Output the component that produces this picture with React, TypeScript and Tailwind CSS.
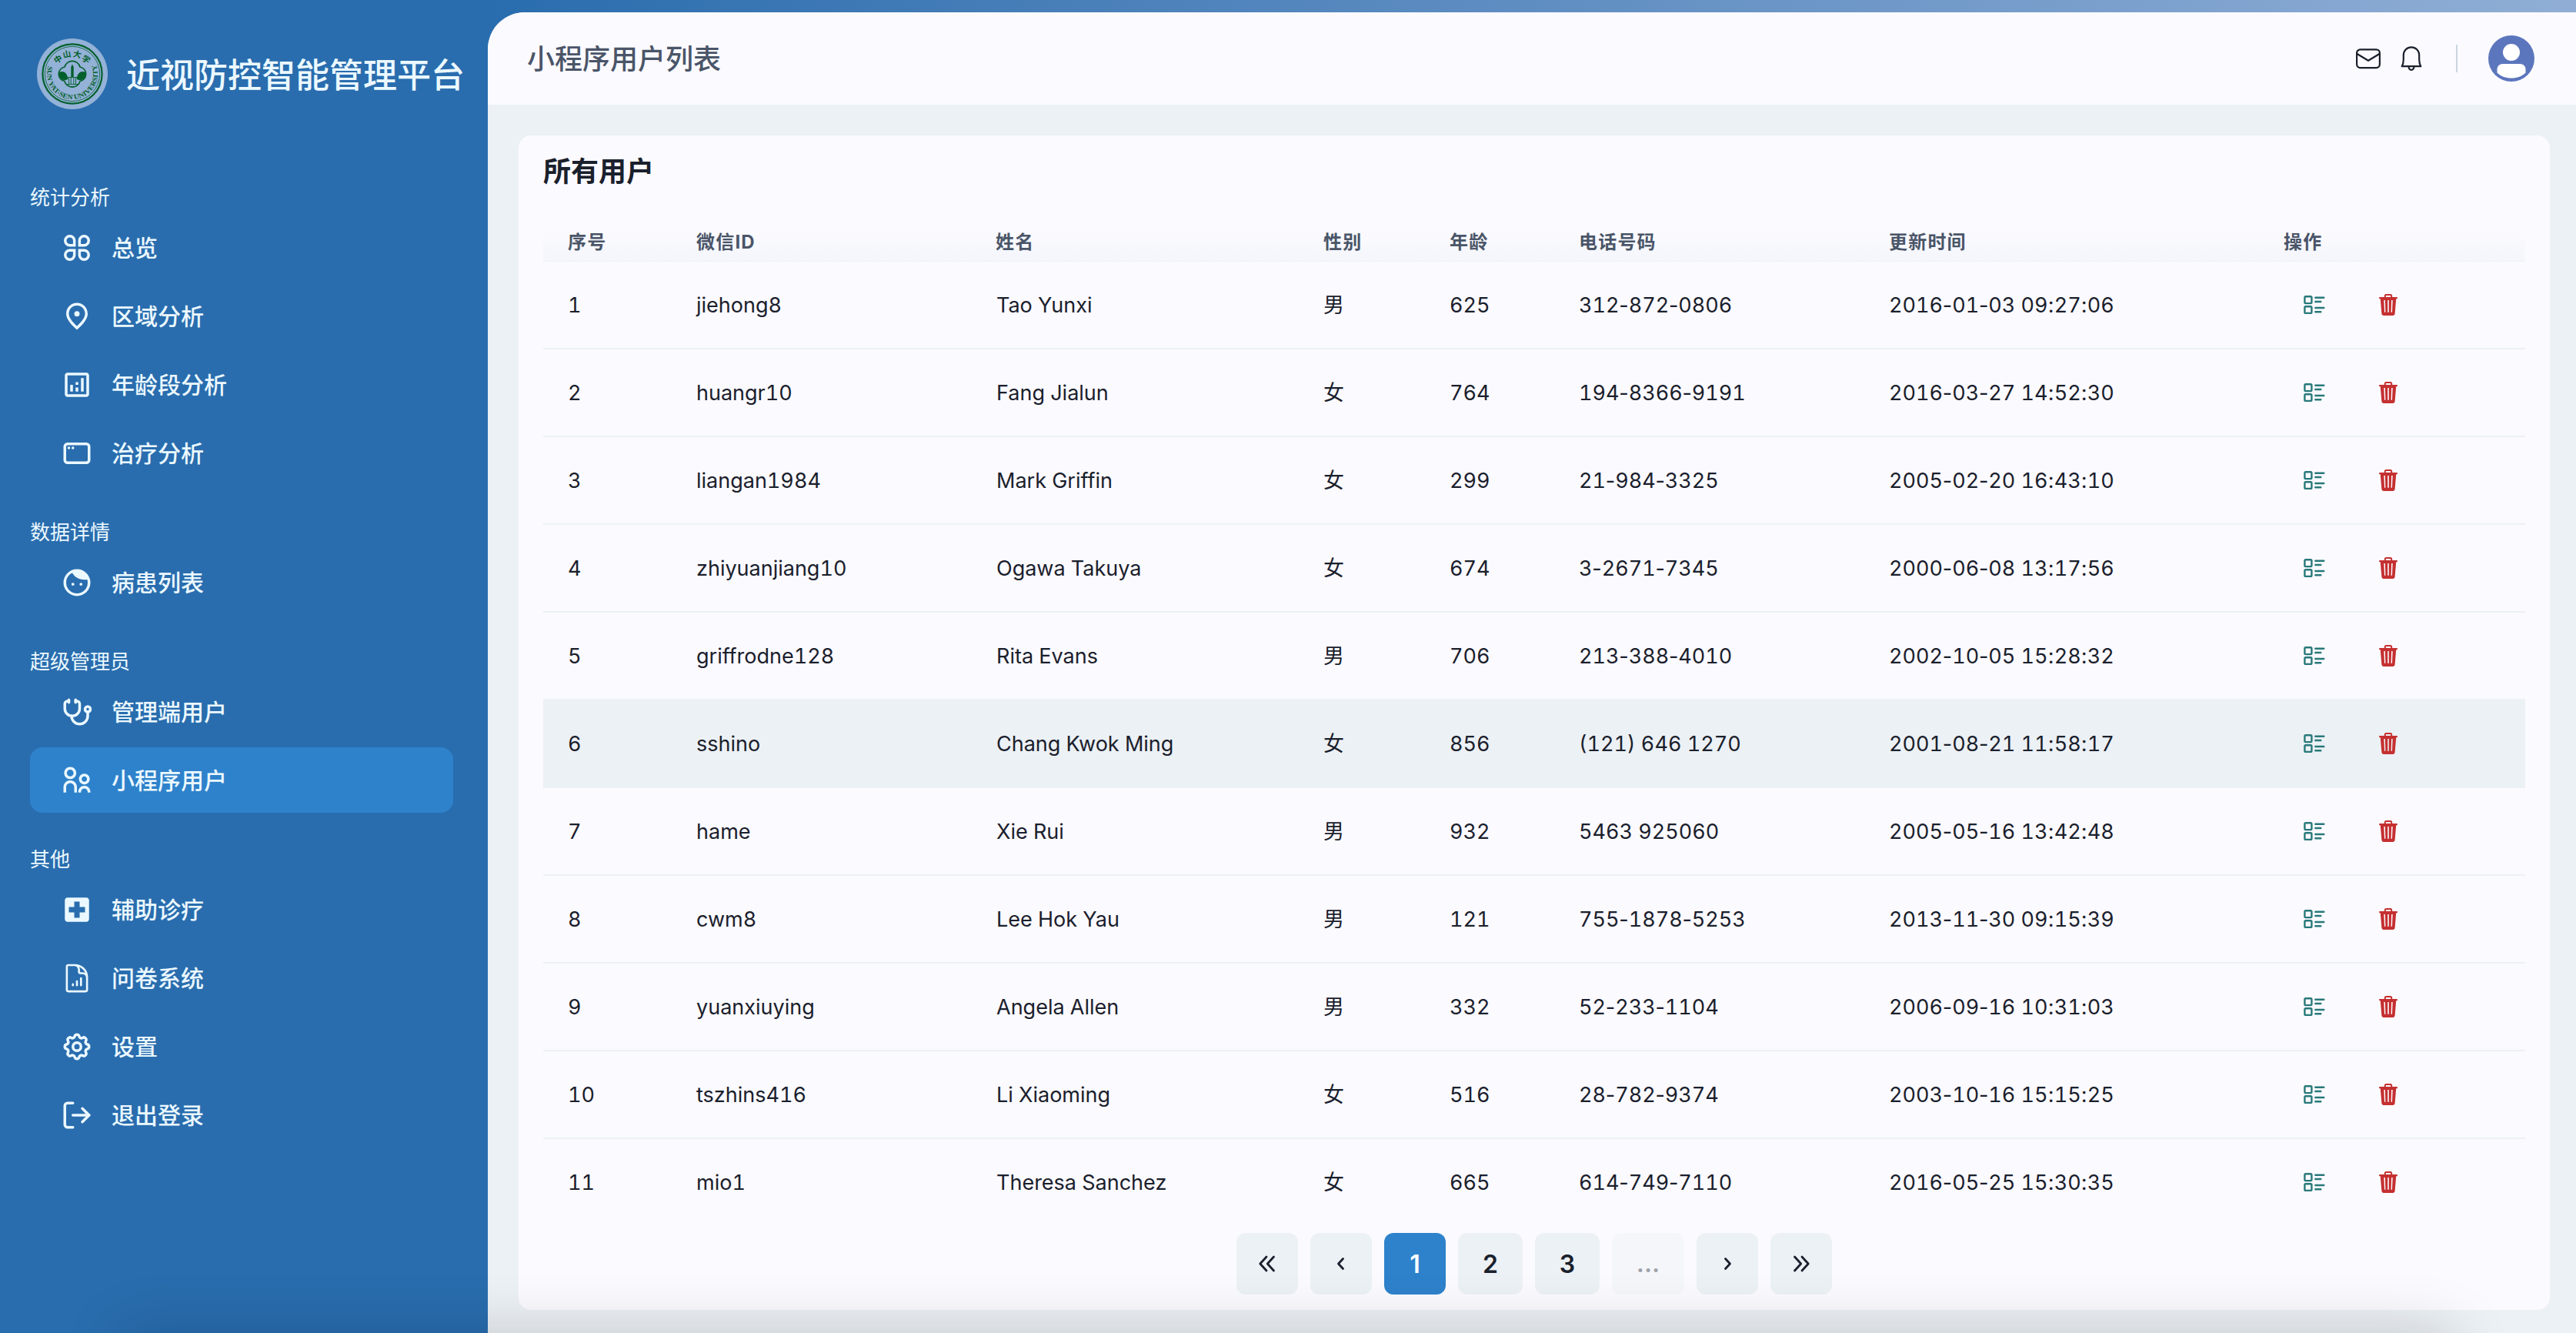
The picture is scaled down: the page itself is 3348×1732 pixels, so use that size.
import type { ReactNode } from "react";
import { RiParentLine } from "react-icons/ri";
import { TbSettings, TbStethoscope } from "react-icons/tb";
import { LogOut } from "lucide-react";

const ICON = "size-[42px]";

function StrokeIcon({ width = 2, children }: { width?: number; children: ReactNode }) {
  return (
    <svg viewBox="0 0 24 24" className={ICON} fill="none" stroke="currentColor" strokeWidth={width} strokeLinecap="round" strokeLinejoin="round">
      {children}
    </svg>
  );
}

function FillIcon({ children }: { children: ReactNode }) {
  return (
    <svg viewBox="0 0 24 24" className={ICON} fill="currentColor">
      {children}
    </svg>
  );
}

const icons = {
  overview: (
    <StrokeIcon>
      <path strokeLinejoin="miter" d="M10.1 10.1V6.7A3.4 3.4 0 1 0 6.7 10.1ZM13.9 10.1V6.7A3.4 3.4 0 1 1 17.3 10.1ZM10.1 13.9V17.3A3.4 3.4 0 1 1 6.7 13.9ZM13.9 13.9V17.3A3.4 3.4 0 1 0 17.3 13.9Z" />
    </StrokeIcon>
  ),
  region: (
    <FillIcon>
      <path fillRule="evenodd" d="M12 2c4.2 0 8 3.22 8 8.2 0 3.32-2.67 7.25-8 11.8-5.33-4.55-8-8.48-8-11.8C4 5.22 7.8 2 12 2zm6 8.2C18 6.57 15.35 4 12 4s-6 2.57-6 6.2c0 2.34 1.95 5.44 6 9.14 4.05-3.7 6-6.8 6-9.14z" />
      <circle cx="12" cy="10.2" r="2" />
    </FillIcon>
  ),
  age: (
    <FillIcon>
      <path d="M19 3H5c-1.1 0-2 .9-2 2v14c0 1.1.9 2 2 2h14c1.1 0 2-.9 2-2V5c0-1.1-.9-2-2-2zm0 16H5V5h14v14z" />
      <path d="M7 12h2v5H7zM15 7h2v10h-2zM11 14h2v3h-2zM11 10h2v2h-2z" />
    </FillIcon>
  ),
  treatment: (
    <StrokeIcon>
      <rect x="3" y="5" width="18" height="14" rx="2" />
      <path d="M6 8h.01M9 8h.01" />
    </StrokeIcon>
  ),
  patients: (
    <FillIcon>
      <circle cx="12" cy="12" r="9" fill="none" stroke="currentColor" strokeWidth="2" />
      <path d="M8.2 4.2C10 7.8 13.4 9.9 17.5 9.9c1.2 0 2.4-.1 3.6-.5A9.4 9.4 0 0 0 8.2 4.2z" />
      <circle cx="9" cy="13.2" r="1.1" />
      <circle cx="15" cy="13.2" r="1.1" />
    </FillIcon>
  ),
  admins: <TbStethoscope className={ICON} />,
  users: <RiParentLine className={ICON} />,
  hospital: (
    <FillIcon>
      <path fillRule="evenodd" d="M19 3H5c-1.1 0-2 .9-2 2v14c0 1.1.9 2 2 2h14c1.1 0 2-.9 2-2V5c0-1.1-.9-2-2-2zm-1 11h-4v4h-4v-4H6v-4h4V6h4v4h4v4z" />
    </FillIcon>
  ),
  survey: (
    <StrokeIcon width={1.5}>
      <path d="M19.5 14.25v-2.625a3.375 3.375 0 0 0-3.375-3.375h-1.5A1.125 1.125 0 0 1 13.5 7.125v-1.5a3.375 3.375 0 0 0-3.375-3.375H8.25M9 16.5v.75m3-3v3M15 12v5.25m-4.5-15H5.625c-.621 0-1.125.504-1.125 1.125v17.25c0 .621.504 1.125 1.125 1.125h12.75c.621 0 1.125-.504 1.125-1.125V11.25a9 9 0 0 0-9-9Z" />
    </StrokeIcon>
  ),
  settings: <TbSettings className={ICON} />,
  logout: <LogOut className={ICON} strokeWidth={2} />,
};

const sections: { title: string; items: { label: string; icon: keyof typeof icons; active?: boolean }[] }[] = [
  {
    title: "统计分析",
    items: [
      { label: "总览", icon: "overview" },
      { label: "区域分析", icon: "region" },
      { label: "年龄段分析", icon: "age" },
      { label: "治疗分析", icon: "treatment" },
    ],
  },
  { title: "数据详情", items: [{ label: "病患列表", icon: "patients" }] },
  {
    title: "超级管理员",
    items: [
      { label: "管理端用户", icon: "admins" },
      { label: "小程序用户", icon: "users", active: true },
    ],
  },
  {
    title: "其他",
    items: [
      { label: "辅助诊疗", icon: "hospital" },
      { label: "问卷系统", icon: "survey" },
      { label: "设置", icon: "settings" },
      { label: "退出登录", icon: "logout" },
    ],
  },
];

const headers = ["序号", "微信ID", "姓名", "性别", "年龄", "电话号码", "更新时间", "操作"];

const rows = [
  ["1", "jiehong8", "Tao Yunxi", "男", "625", "312-872-0806", "2016-01-03 09:27:06"],
  ["2", "huangr10", "Fang Jialun", "女", "764", "194-8366-9191", "2016-03-27 14:52:30"],
  ["3", "liangan1984", "Mark Griffin", "女", "299", "21-984-3325", "2005-02-20 16:43:10"],
  ["4", "zhiyuanjiang10", "Ogawa Takuya", "女", "674", "3-2671-7345", "2000-06-08 13:17:56"],
  ["5", "griffrodne128", "Rita Evans", "男", "706", "213-388-4010", "2002-10-05 15:28:32"],
  ["6", "sshino", "Chang Kwok Ming", "女", "856", "(121) 646 1270", "2001-08-21 11:58:17"],
  ["7", "hame", "Xie Rui", "男", "932", "5463 925060", "2005-05-16 13:42:48"],
  ["8", "cwm8", "Lee Hok Yau", "男", "121", "755-1878-5253", "2013-11-30 09:15:39"],
  ["9", "yuanxiuying", "Angela Allen", "男", "332", "52-233-1104", "2006-09-16 10:31:03"],
  ["10", "tszhins416", "Li Xiaoming", "女", "516", "28-782-9374", "2003-10-16 15:15:25"],
  ["11", "mio1", "Theresa Sanchez", "女", "665", "614-749-7110", "2016-05-25 15:30:35"],
];

const GRID = "grid grid-cols-[167px_389px_426px_164px_168px_403px_513px_346px]";

function Emblem() {
  return (
    <svg viewBox="0 0 92 92" className="size-[92px] shrink-0" fill="none" stroke="#03602c">
      <circle cx="46" cy="46" r="46" fill="#94b1d7" stroke="none" />
      <circle cx="46" cy="46" r="38.6" strokeWidth="2.2" />
      <circle cx="46" cy="46" r="35.6" strokeWidth="0.8" />
      <path id="emblem-arc" d="M14.6 35.8A33 33 0 1 0 77.4 35.8" stroke="none" />
      <g fill="#03602c" stroke="none" fontFamily="Liberation Serif, serif" fontWeight="700">
        <text fontSize="9">
          <textPath href="#emblem-arc" textLength="126" lengthAdjust="spacingAndGlyphs">SUN YAT-SEN UNIVERSITY</textPath>
        </text>
        <g fontFamily="Noto Sans CJK SC, sans-serif" fontSize="10.5" textAnchor="middle">
          <text transform="translate(27.5 27) rotate(-32)" y="3.8">中</text>
          <text transform="translate(38.8 20.5) rotate(-12)" y="3.8">山</text>
          <text transform="translate(52.5 20.5) rotate(12)" y="3.8">大</text>
          <text transform="translate(64 27) rotate(32)" y="3.8">学</text>
        </g>
      </g>
      <path strokeWidth="1.6" d="M36 37A10.200 9.500 0 0 1 56 37A10 9.500 0 0 1 56 55.500A10.200 9.500 0 0 1 36 55.500A10 9.500 0 0 1 36 37Z" />
      <path fill="#03602c" stroke="none" d="M29 44c5-2.500 10 0 11.500 8.500-3 2.500-7.500 2-9.500-.5s-3-5.500-2-8zM63 44c-5-2.500-10 0-11.500 8.500 3 2.500 7.500 2 9.500-.5s3-5.500 2-8zM44.300 37l1.700-3.500 1.700 3.500v13h-3.400z" />
      <path strokeWidth="0.9" d="M40 50.500h12M41.500 51v8M44.200 50v9M47.800 50v9M50.500 51v8M39 59.500h14M42 62.500h8" />
    </svg>
  );
}

function Sidebar() {
  return (
    <aside className="flex w-[634px] shrink-0 flex-col bg-[#296dae] text-[#ebf8ff]">
      <div className="flex h-[192px] items-center gap-6 pl-12 whitespace-nowrap">
        <Emblem />
        <h1 className="pt-1 text-[44px] leading-none font-medium">近视防控智能管理平台</h1>
      </div>
      <nav className="flex w-[589px] flex-col gap-[39px] pt-[43px] pl-[39px]">
        {sections.map((s) => (
          <section key={s.title} className="flex flex-col gap-1">
            <h2 className="flex h-10 items-center pt-[3px] text-[26px] leading-none font-normal">{s.title}</h2>
            {s.items.map((item) => (
              <a
                key={item.label}
                className={
                  item.active
                    ? "flex h-[85px] items-center gap-6 rounded-2xl bg-[#2e82cb] pl-10"
                    : "flex h-[85px] items-center gap-6 pl-10"
                }
              >
                {icons[item.icon]}
                <span className="text-[30px] leading-none font-medium">{item.label}</span>
              </a>
            ))}
          </section>
        ))}
      </nav>
    </aside>
  );
}

function Header() {
  return (
    <header className="flex h-[120px] items-center justify-between bg-[#fbfaff] pr-[54px] pl-[51px]">
      <h2 className="pt-0.5 text-[36px] leading-none font-medium text-[#4a5568]">小程序用户列表</h2>
      <div className="flex items-center">
        <svg viewBox="0 0 32 32" className="size-8" fill="none" stroke="#1a202c" strokeWidth="2.200">
          <rect x="1.100" y="4.300" width="29.800" height="23.800" rx="4.500" />
          <path d="M1.500 10L16 18.800L30.500 10" strokeLinejoin="round" />
        </svg>
        <svg viewBox="0 0 32 32" className="ml-6 size-8" fill="none" stroke="#1a202c" strokeWidth="2.200" strokeLinejoin="round">
          <path d="M3.700 26.200C5.300 23.500 5.800 20.500 5.800 17.500V11.500a10.200 10.200 0 0 1 20.400 0V17.500c0 3 .5 6 2.100 8.700Z" />
          <path d="M12.500 26.500c.2 2.600 1.600 4.300 3.500 4.300s3.300-1.700 3.500-4.300" />
        </svg>
        <div className="ml-[42px] h-9 w-0.5 bg-[#cbd5df]" />
        <svg viewBox="0 0 60 60" className="ml-10 size-[60px]">
          <circle cx="30" cy="30" r="30" fill="#5c76bd" />
          <circle cx="30" cy="22" r="11" fill="#fff" />
          <path fill="#fff" d="M19 37h22c4.500 0 7.500 3 7.500 7v4.500C44 53 37.500 55.500 30 55.500S16 53 11.500 48.500V44c0-4 3-7 7.500-7z" />
        </svg>
      </div>
    </header>
  );
}

function DetailIcon() {
  return (
    <svg viewBox="0 0 28 24" className="h-6 w-7" fill="none" stroke="#28797a" strokeWidth="2.400" strokeLinecap="round">
      <rect x="1.400" y="1.300" width="9" height="8.800" rx="1.300" />
      <rect x="1.400" y="14.200" width="9" height="8.800" rx="1.300" />
      <path d="M15.300 2.700H26.300M15.300 8H22.300M15.300 16H26.300M15.300 21.300H22.300" />
    </svg>
  );
}

function TrashIcon() {
  return (
    <svg viewBox="0 0 24 28" className="h-7 w-6" fill="#c53030">
      <path d="M7.800 4V2.500C7.800 1.600 8.400 1 9.300 1h5.400c.9 0 1.500.6 1.500 1.500V4" fill="none" stroke="#c53030" strokeWidth="2" />
      <rect x="0" y="4" width="24" height="2.200" rx="1" />
      <path fillRule="evenodd" d="M1.700 5.500H22.300L20.600 25.600c-.1 1.400-1.200 2.400-2.600 2.400H6c-1.400 0-2.500-1-2.600-2.400ZM6.300 8l.7 15.800h1.400L7.900 8ZM11.200 8v15.800h1.600V8ZM16.100 8l-.5 15.800h1.400L17.700 8Z" />
    </svg>
  );
}

function Chevrons({ kind }: { kind: "first" | "prev" | "next" | "last" }) {
  const paths = {
    first: "M19 11L10.800 20L19 29M28.500 11L20.300 20L28.500 29",
    prev: "M22.500 13.500L16.500 20L22.500 26.500",
    next: "M17.500 13.500L23.500 20L17.500 26.500",
    last: "M11.500 11L19.700 20L11.500 29M21 11L29.200 20L21 29",
  };
  return (
    <svg viewBox="0 0 40 40" className="size-10" fill="none" stroke="#1a202c" strokeWidth="2.800" strokeLinecap="round" strokeLinejoin="round">
      <path d={paths[kind]} />
    </svg>
  );
}

const PAGE = "flex h-20 items-center justify-center rounded-xl text-[32px] leading-none font-semibold";

function Pagination() {
  return (
    <div className="mt-2 flex justify-center gap-4 text-[#1a202c]">
      <button className={`${PAGE} w-20 bg-[#ecf1f5]`}><Chevrons kind="first" /></button>
      <button className={`${PAGE} w-20 bg-[#ecf1f5]`}><Chevrons kind="prev" /></button>
      <button className={`${PAGE} w-20 bg-[#2e82cb] pt-0.5 text-white`}>1</button>
      <button className={`${PAGE} w-[84px] bg-[#ecf1f5] pt-0.5`}>2</button>
      <button className={`${PAGE} w-[84px] bg-[#ecf1f5] pt-0.5`}>3</button>
      <button className={`${PAGE} w-[94px] bg-[#ecf1f5] opacity-40`}>...</button>
      <button className={`${PAGE} w-20 bg-[#ecf1f5]`}><Chevrons kind="next" /></button>
      <button className={`${PAGE} w-20 bg-[#ecf1f5]`}><Chevrons kind="last" /></button>
    </div>
  );
}

/** Tabular figures widen the hyphen as well, so its side bearings are pulled in. */
function CellText({ value }: { value: string }) {
  return value.split(/([-:])/).map((part, i) => {
    if (part === "-") return <span key={i} className="-mx-[2.7px]">-</span>;
    if (part === ":") return <span key={i} className="mx-[0.4px]">:</span>;
    return part;
  });
}

function UserTable() {
  return (
    <div className="text-[#1a202c]">
      <div className={`${GRID} mt-[51px] h-10 items-start border-b border-[#ecf1f5] bg-linear-to-b from-[#fbfaff] to-[#f4f6fb] pt-[3px] text-[24px] leading-none font-bold tracking-[1.2px] text-[#4a5568]`}>
        {headers.map((h) => (
          <div key={h} className="pl-8 whitespace-nowrap">{h}</div>
        ))}
      </div>
      {rows.map((r, i) => (
        <div
          key={r[0]}
          className={`${GRID} h-[114px] items-center border-b-2 text-[27px] leading-none whitespace-nowrap tabular-nums ${
            i === 10 ? "border-transparent" : "border-[#ecf1f5]"
          } ${i === 5 ? "bg-[#ecf1f5]" : ""}`}
        >
          {r.map((c, j) => (
            <div key={j} className={j === 2 ? "pt-px pl-[33px]" : "pt-px pl-8"}>
              <CellText value={c} />
            </div>
          ))}
          <div className="flex items-center gap-[70px] pl-[58px]">
            <DetailIcon />
            <TrashIcon />
          </div>
        </div>
      ))}
    </div>
  );
}

export default function App() {
  return (
    <div className="relative flex h-[1732px] w-[3348px] overflow-hidden bg-linear-to-r from-[#296dae] from-[19%] to-[#90aed5] font-['Inter','Noto_Sans_CJK_SC',sans-serif]">
      <Sidebar />
      <main className="mt-4 flex grow flex-col overflow-hidden rounded-tl-[48px] bg-[#ecf1f5]">
        <Header />
        <div className="mt-10 mr-[34px] ml-10 h-[1526px] rounded-2xl bg-[#fbfaff] px-8 pt-[29px]">
          <h3 className="h-[44px] text-[36px] leading-[36px] font-bold text-[#1a202c]">所有用户</h3>
          <UserTable />
          <Pagination />
        </div>
      </main>
      <div className="pointer-events-none absolute top-full right-40 left-40 h-40 shadow-[0_0_80px_rgba(10,5,30,0.18)]" />
    </div>
  );
}
